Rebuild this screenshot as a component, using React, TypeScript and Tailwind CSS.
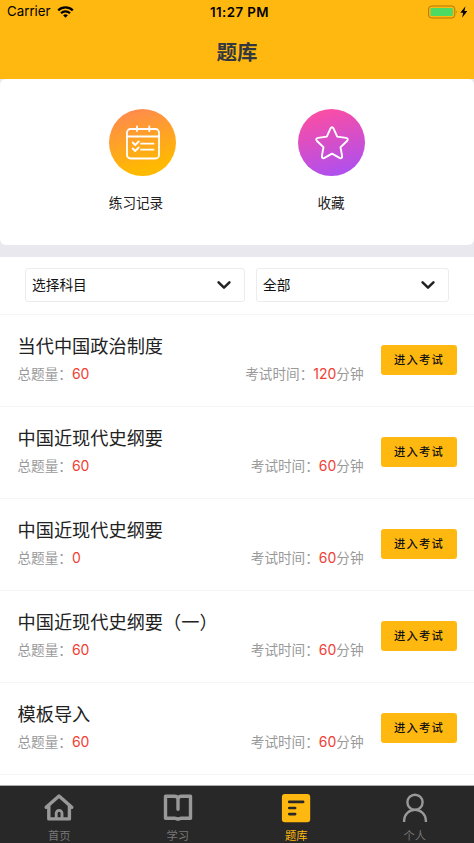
const exams = [
  { title: "当代中国政治制度", total: 60, minutes: 120 },
  { title: "中国近现代史纲要", total: 60, minutes: 60 },
  { title: "中国近现代史纲要", total: 0, minutes: 60 },
  { title: "中国近现代史纲要（一）", total: 60, minutes: 60 },
  { title: "模板导入", total: 60, minutes: 60 },
];

const tabs = [
  { label: "首页", Icon: HomeIcon },
  { label: "学习", Icon: BookIcon },
  { label: "题库", Icon: PaperIcon, active: true },
  { label: "个人", Icon: UserIcon },
];

function HomeIcon() {
  return (
    <svg width="32" height="30" viewBox="0 0 32 30" fill="none" stroke="currentColor" strokeWidth="3.4" strokeLinecap="round" strokeLinejoin="round">
      <path d="M3.2 14.300 16 2.900l12.800 11.400" />
      <path d="M5.800 13v12.900h20.600V13" />
      <path d="M13.200 25v-4.800a2.900 2.900 0 0 1 5.800 0V25" strokeWidth="2.800" />
    </svg>
  );
}

function BookIcon() {
  return (
    <svg width="32" height="30" viewBox="0 0 32 30" fill="none" stroke="currentColor" strokeWidth="3.400" strokeLinecap="round" strokeLinejoin="round">
      <path d="M16 16.300V6c-.4-1.900-1.600-2.700-3.500-2.700H3.500v21.900h9.300c1.500 0 1.800.8 3.200.8s1.700-.8 3.200-.8h9.300V3.300h-9c-1.900 0-3.100.8-3.500 2.700" />
    </svg>
  );
}

function PaperIcon() {
  return (
    <svg width="32" height="30" viewBox="0 0 32 30" fill="none">
      <rect x="1.900" y="1" width="28.300" height="28.300" rx="3" fill="#ffb80f" />
      <path d="M9.300 8.900h13.800M9.300 15h5.800M9.300 21.100h5.800" stroke="#282828" strokeWidth="2.700" strokeLinecap="round" />
    </svg>
  );
}

function UserIcon() {
  return (
    <svg width="32" height="30" viewBox="0 0 32 30" fill="none" stroke="currentColor" strokeWidth="2.400">
      <circle cx="16" cy="9.300" r="7.600" />
      <path d="M5.100 29v-1.300a10.900 10.900 0 0 1 21.800 0V29" />
    </svg>
  );
}

function StatusBar() {
  return (
    <div className="grid h-6 grid-cols-3 items-center px-[7px] font-['Inter'] text-[13.3px] text-black">
      <div className="flex items-center gap-[6px]">
        <span>Carrier</span>
        <svg width="17" height="12" viewBox="0 0 17 12" fill="none" stroke="currentColor" strokeWidth="2.200">
          <path d="M1.200 4.400a10.400 10.400 0 0 1 14.600 0M4 7.200a6.400 6.400 0 0 1 9 0" />
          <path d="m8.500 11.800-2.400-2.500a3.500 3.500 0 0 1 4.800 0z" fill="currentColor" stroke="none" />
        </svg>
      </div>
      <div className="pl-[5px] pt-px text-center font-semibold tracking-[0.4px]">11:27 PM</div>
      <div className="flex items-center justify-end">
        <svg width="40" height="14" viewBox="0 0 40 14">
          <rect x="1.600" y="1" width="26.200" height="12" rx="3" fill="none" stroke="#ad7a0c" />
          <rect x="3.500" y="2.900" width="22.400" height="8.200" rx="1.200" fill="#4cd964" />
          <path d="M29.300 5.200q1.600 1.800 0 3.600z" fill="#ad7a0c" />
          <path d="m38.500 1.300-5.200 6.400h2.900l-1.100 5 5.200-6.600h-2.900z" fill="#000" />
        </svg>
      </div>
    </div>
  );
}

function Select({ label, className }: { label: string; className: string }) {
  return (
    <button className={`flex h-[34px] items-center justify-between rounded-[3px] border border-[#ececec] pb-px pl-[6px] pr-[13px] text-[13.700px] text-[#111] ${className}`}>
      <span>{label}</span>
      <svg width="14" height="10" viewBox="0 0 14 10" fill="none" stroke="#222" strokeWidth="2.500" strokeLinecap="round" strokeLinejoin="round">
        <path d="m1.600 2.300 5.400 5.300 5.400-5.300" />
      </svg>
    </button>
  );
}

export default function App() {
  return (
    <main className="flex h-[843px] w-[474px] flex-col overflow-hidden bg-white font-['Noto_Sans_CJK_SC',sans-serif]">
      <header className="h-[79px] shrink-0 bg-[#ffb80f]">
        <StatusBar />
        <h1 className="pt-[12px] text-center text-[20.500px] leading-[30px] font-bold text-[#333840]">题库</h1>
      </header>

      {/* shortcuts */}
      <section className="h-[178px] shrink-0 bg-[#e9e8ee]">
        <div className="flex h-[166px] rounded-[6px] bg-white px-[45px] pt-[30px]">
          <div className="flex w-[195px] shrink-0 flex-col items-center pr-[13px]">
            <div className="ml-[13px] flex size-[67px] items-center justify-center rounded-full bg-linear-[165deg,#ff8b4d_8%,#ffb900_82%]">
              <svg width="36" height="36" viewBox="0 0 36 36" fill="none" stroke="#fff" strokeWidth="1.800" strokeLinecap="round" strokeLinejoin="round">
                <rect x="2" y="4" width="32" height="29.500" rx="3.500" />
                <path d="M2 11.500h32M12 1.500V6M24.300 1.500V6M16 18.700h12.500M16 24.700h12.500M7.700 17.500l2.500 2.500 3.500-3.500M7.700 23.500l2.500 2.500 3.500-3.500" />
              </svg>
            </div>
            <span className="mt-[16px] text-[13.600px] leading-5 text-[#222]">练习记录</span>
          </div>
          <div className="flex w-[195px] shrink-0 flex-col items-center pr-[13px]">
            <div className="ml-px flex size-[67px] items-center justify-center rounded-full bg-linear-[165deg,#ff4da0_5%,#ad50f0_92%]">
              <svg width="36" height="36" viewBox="0 0 36 36" fill="none" stroke="#fff" strokeWidth="1.900" strokeLinejoin="round">
                <path d="M16.400 3.600q1.600-2.600 3.200 0l3.600 8 8.800 1.300q3 .8 1 3.100l-6.500 6.200 1.600 8.800q.1 3-2.600 1.900L18 28.600l-7.500 4.300q-2.700 1.100-2.600-1.900l1.600-8.800L3 16q-2-2.300 1-3.100l8.800-1.300z" />
              </svg>
            </div>
            <span className="mt-[16px] text-[13.600px] leading-5 text-[#222]">收藏</span>
          </div>
        </div>
      </section>

      {/* filters */}
      <section className="flex h-[58px] shrink-0 gap-[11px] border-b border-[#f5f5f5] pl-[25px] pt-[11px]">
        <Select label="选择科目" className="w-[220px]" />
        <Select label="全部" className="w-[193px]" />
      </section>

      <section className="min-h-0 flex-1 overflow-hidden">
        {exams.map((exam, i) => (
          <article key={i} className="flex h-[92px] items-center border-b border-[#f5f5f5] pb-[2px] pl-[17.500px] pr-[17px]">
            <div className="w-[346px] pb-px">
              <h2 className="text-[18.200px] leading-[28px] text-[#222]">{exam.title}</h2>
              <div className="flex justify-between text-[13.600px] leading-[28px] text-[#999]">
                <span>总题量：<b className="font-['Inter'] text-[14px] font-normal text-[#f04134]">{exam.total}</b></span>
                <span>考试时间：<b className="font-['Inter'] text-[14px] font-normal text-[#f04134]">{exam.minutes}</b>分钟</span>
              </div>
            </div>
            <button className="ml-auto h-[30px] w-[76px] rounded-[3px] bg-[#ffb80f] text-[11.300px] font-medium tracking-[1.200px] text-[#111]">
              进入考试
            </button>
          </article>
        ))}
      </section>

      <nav className="grid h-[58px] shrink-0 grid-cols-4 border-t border-[#aaa] bg-[#282828] pt-[7px]">
        {tabs.map(({ label, Icon, active }) => (
          <div key={label} className={`flex flex-col items-center ${active ? "text-[#ffb80f]" : "text-[#999]"}`}>
            <Icon />
            <span className={`mt-[3px] text-[11.300px] leading-[18px] ${active ? "" : "text-[#777]"}`}>{label}</span>
          </div>
        ))}
      </nav>
    </main>
  );
}
